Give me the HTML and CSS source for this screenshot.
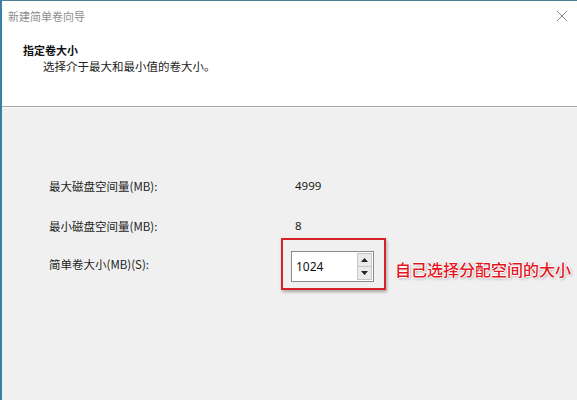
FILE: index.html
```html
<!DOCTYPE html>
<html lang="zh-CN">
<head>
<meta charset="utf-8">
<link rel="stylesheet" href="styles.css">
</head>
<body>
<div class="window">
  <div class="titlebar">
    <span class="title">新建简单卷向导</span>
    <svg class="close" width="12" height="12" viewBox="0 0 12 12"><path d="M1 1L11 11M11 1L1 11" stroke="#8c8c8c" stroke-width="1" fill="none"/></svg>
  </div>
  <div class="header">
    <div class="h-title">指定卷大小</div>
    <div class="h-sub">选择介于最大和最小值的卷大小。</div>
  </div>
  <div class="content">
    <div class="row r1">
      <span class="label">最大磁盘空间量(MB):</span>
      <span class="value">4999</span>
    </div>
    <div class="row r2">
      <span class="label">最小磁盘空间量(MB):</span>
      <span class="value">8</span>
    </div>
    <div class="row r3">
      <span class="label">简单卷大小(MB)(S):</span>
      <div class="valuebox">
        <div class="redbox">
          <div class="spin">
            <span class="spin-text">1024</span>
            <div class="spin-btns">
              <div class="sbtn"><svg width="7" height="4" viewBox="0 0 7 4"><path d="M3.5 0L7 4H0Z" fill="#222"/></svg></div>
              <div class="sbtn"><svg width="7" height="4" viewBox="0 0 7 4"><path d="M0 0H7L3.5 4Z" fill="#222"/></svg></div>
            </div>
          </div>
        </div>
        <span class="note">自己选择分配空间的大小</span>
      </div>
    </div>
  </div>
</div>
</body>
</html>
```
FILE: styles.css
```css
html, body {
  margin: 0;
  padding: 0;
  width: 577px;
  height: 400px;
  overflow: hidden;
}
body {
  font-family: "Noto Sans", "Noto Sans CJK SC", sans-serif;
  font-size: 11.5px;
  color: #1a1a1a;
}
.window {
  width: 577px;
  height: 400px;
  box-sizing: border-box;
  border-left: 2px solid #3a7fa8;
  border-top: 1px solid #4d7f96;
  background: #f0f0f0;
  display: flex;
  flex-direction: column;
}
.titlebar {
  height: 29px;
  background: #fff;
  display: flex;
  align-items: center;
  justify-content: space-between;
  padding: 0 9px 0 6px;
}
.title {
  font-family: "Noto Sans CJK SC", sans-serif;
  font-size: 11px;
  color: #8e8e8e;
}
.close {
  display: block;
}
.header {
  height: 77px;
  background: #fff;
  border-bottom: 1px solid #a5a5a5;
  box-sizing: border-box;
  padding: 12px 0 0 21px;
  font-family: "Noto Sans CJK SC", sans-serif;
}
.h-title {
  font-size: 11px;
  font-weight: bold;
  color: #111;
  line-height: 16px;
}
.h-sub {
  font-size: 11.5px;
  line-height: 16px;
  padding-left: 20px;
  color: #222;
}
.content {
  border-top: 1px solid #fdfdfd;
  padding: 68px 0 0 47px;
  display: flex;
  flex-direction: column;
}
.row {
  display: grid;
  grid-template-columns: 232px auto;
  align-items: center;
}
.r1 { height: 20px; }
.r2 { height: 20px; margin-top: 20px; }
.r3 { margin-top: 2px; }
.label {
  font-family: "Noto Sans CJK SC", sans-serif;
  line-height: 20px;
  color: #1e1e1e;
}
.value {
  padding-left: 14px;
  font-family: "Noto Sans", sans-serif;
  line-height: 20px;
}
.valuebox {
  display: flex;
  align-items: center;
  gap: 9px;
}
.redbox {
  border: 2px solid #d5212b;
  padding: 11px 10px 6px 8px;
  box-shadow: 1px 2px 3px rgba(0, 0, 0, 0.3);
}
.spin {
  width: 83px;
  height: 31px;
  box-sizing: border-box;
  border: 1px solid #8a8a8a;
  background: #fff;
  display: flex;
  align-items: center;
  justify-content: space-between;
  padding: 1px 1px 1px 4px;
}
.spin-text {
  font-family: "Noto Sans", sans-serif;
  font-size: 12px;
  color: #111;
}
.spin-btns {
  display: flex;
  flex-direction: column;
  height: 100%;
  width: 15px;
}
.sbtn {
  flex: 1;
  background: #eaeaea;
  border: 1px solid #c6c6c6;
  display: flex;
  align-items: center;
  justify-content: center;
}
.sbtn + .sbtn {
  border-top: none;
}
.note {
  font-family: "Noto Sans CJK SC", sans-serif;
  font-size: 16px;
  font-weight: 500;
  line-height: 20px;
  color: #e3161f;
  text-shadow: -1px 0 #fff, 1px 0 #fff, 0 -1px #fff, 0 1px #fff, 1px 1px 3px rgba(0, 0, 0, 0.45);
  margin-top: 10px;
}
```
